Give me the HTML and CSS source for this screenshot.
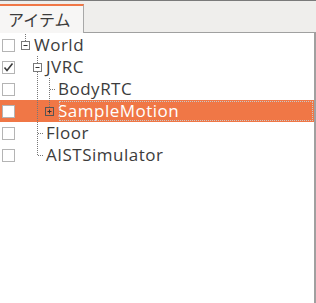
FILE: index.html
```html
<!DOCTYPE html>
<html lang="ja">
<head>
    <meta charset="UTF-8">
    <title>アイテム</title>
    <link rel="stylesheet" href="styles.css">
</head>
<body>

<div class="tabbar">
    <div class="tab">アイテム</div>
</div>

<div class="panel">
    <!-- World -->
    <div class="row">
        <span class="check"></span>
        <svg class="guide lv0" width="19" height="22">
            <line x1="10.5" y1="0" x2="10.5" y2="7" class="dots"/>
            <rect x="6.5" y="7.5" width="8" height="8" class="box"/>
            <line x1="8.5" y1="11.5" x2="12.5" y2="11.5" class="sign"/>
        </svg>
        <span class="label">World</span>
    </div>
    <!-- JVRC -->
    <div class="row">
        <span class="check on">
            <svg width="11" height="11"><path d="M1.5 5.5 L4 8.5 L9.5 1.5" class="tick"/></svg>
        </span>
        <svg class="guide lv1" width="31" height="22">
            <line x1="22.5" y1="0" x2="22.5" y2="7" class="dots"/>
            <line x1="22.5" y1="16" x2="22.5" y2="22" class="dots"/>
            <rect x="18.5" y="7.5" width="8" height="8" class="box"/>
            <line x1="20.5" y1="11.5" x2="24.5" y2="11.5" class="sign"/>
        </svg>
        <span class="label">JVRC</span>
    </div>
    <!-- BodyRTC -->
    <div class="row">
        <span class="check"></span>
        <svg class="guide lv2" width="43" height="22">
            <line x1="22.5" y1="0" x2="22.5" y2="22" class="dots"/>
            <line x1="34.5" y1="0" x2="34.5" y2="22" class="dots"/>
            <line x1="35" y1="11.5" x2="41" y2="11.5" class="dots"/>
        </svg>
        <span class="label">BodyRTC</span>
    </div>
    <!-- SampleMotion -->
    <div class="row selected">
        <span class="check"></span>
        <svg class="guide lv2" width="43" height="22">
            <line x1="22.5" y1="0" x2="22.5" y2="22" class="dots"/>
            <line x1="34.5" y1="0" x2="34.5" y2="7" class="dots"/>
            <rect x="30.5" y="7.5" width="8" height="8" class="box"/>
            <line x1="32.5" y1="11.5" x2="36.5" y2="11.5" class="sign"/>
            <line x1="34.5" y1="9.5" x2="34.5" y2="13.5" class="sign"/>
        </svg>
        <span class="label focus">SampleMotion</span>
    </div>
    <!-- Floor -->
    <div class="row">
        <span class="check"></span>
        <svg class="guide lv1" width="31" height="22">
            <line x1="22.5" y1="0" x2="22.5" y2="22" class="dots"/>
            <line x1="23" y1="11.5" x2="29" y2="11.5" class="dots"/>
        </svg>
        <span class="label">Floor</span>
    </div>
    <!-- AISTSimulator -->
    <div class="row">
        <span class="check"></span>
        <svg class="guide lv1" width="31" height="22">
            <line x1="22.5" y1="0" x2="22.5" y2="11.5" class="dots"/>
            <line x1="23" y1="11.5" x2="29" y2="11.5" class="dots"/>
        </svg>
        <span class="label">AISTSimulator</span>
    </div>
</div>

</body>
</html>
```

FILE: styles.css
```css
body {
    margin: 0;
    width: 316px;
    height: 303px;
    display: flex;
    flex-direction: column;
    background-color: #efeeec;
    font-family: "Open Sans", "Noto Sans CJK JP", sans-serif;
    overflow: hidden;
}
.tabbar {
    height: 31px;
    border-top: 1px solid #7a7a7a;
    display: flex;
    align-items: flex-end;
}
.tab {
    width: 84px;
    height: 29px;
    margin-bottom: -1px;
    position: relative;
    z-index: 1;
    border-top: 2px solid #f07746;
    border-right: 1px solid #a8a8a8;
    background-color: #f7f6f5;
    font-family: "Noto Sans CJK JP", sans-serif;
    font-size: 16px;
    line-height: 27px;
    padding-left: 8px;
    box-sizing: border-box;
    color: #3c3c3c;
}
.panel {
    flex: 1;
    background-color: #ffffff;
    border-top: 1px solid #a0a0a0;
    border-right: 2px solid #a0a0a0;
    padding-top: 1px;
}
.row {
    height: 22px;
    display: flex;
    align-items: center;
    color: #3c3c3c;
    font-size: 17px;
    letter-spacing: 0.5px;
}
.row.selected {
    background-color: #f07746;
    color: #ffffff;
}
.check {
    width: 11px;
    height: 11px;
    margin-left: 2px;
    border: 1px solid #b4b4b4;
    background-color: #ffffff;
    display: flex;
}
.guide {
    flex: none;
}
.dots {
    stroke: #777777;
    stroke-width: 1;
    stroke-dasharray: 1 1;
}
.box {
    fill: #ffffff;
    stroke: #7a7a7a;
}
.selected .box {
    fill: #f07746;
    stroke: #555555;
}
.sign {
    stroke: #333333;
}
.tick {
    fill: none;
    stroke: #3c3c3c;
    stroke-width: 1.6;
}
.label {
    line-height: 22px;
}
.label.focus {
    flex: 1;
    outline: 1px dotted #c8c8c8;
    outline-offset: -2px;
}
```
